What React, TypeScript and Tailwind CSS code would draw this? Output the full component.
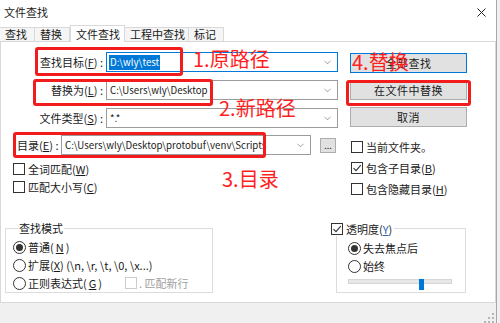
import { ChevronDown } from "lucide-react";

const RED = "border-[#f21c1c]";

function Combo({ value, width, focused, selected }: { value: string; width: string; focused?: boolean; selected?: boolean }) {
  return (
    <div
      className={`${width} h-[20px] flex items-center justify-between border bg-white pl-[2px] pr-[4px] ${
        focused ? "border-[#0078d7]" : "border-[#9c9c9c]"
      }`}
    >
      <span
        className={`text-[9.7px] leading-[15px] px-[1px] whitespace-nowrap ${
          selected ? "bg-[#0078d7] text-white" : "text-[#1a1a1a]"
        }`}
      >
        {value}
      </span>
      <ChevronDown size={11} strokeWidth={1.2} className="text-[#555]" />
    </div>
  );
}

function Label({ text, hot, suffix = "" }: { text: string; hot: string; suffix?: string }) {
  return (
    <>
      {text}(<u>{hot}</u>){suffix}
    </>
  );
}

function CheckBox({ checked, disabled }: { checked?: boolean; disabled?: boolean }) {
  return (
    <span
      className={`w-[12px] h-[12px] shrink-0 border bg-white flex items-center justify-center ${
        disabled ? "border-[#cccccc]" : "border-[#333]"
      }`}
    >
      {checked && (
        <svg width="10" height="10" viewBox="0 0 10 10">
          <path d="M1.5 5.2 L4 7.7 L8.8 2.2" fill="none" stroke="#333" strokeWidth="1.1" />
        </svg>
      )}
    </span>
  );
}

function Radio({ on }: { on?: boolean }) {
  return (
    <span className="w-[13px] h-[13px] shrink-0 rounded-full border border-[#333] bg-white flex items-center justify-center">
      {on && <span className="w-[7px] h-[7px] rounded-full bg-[#333]" />}
    </span>
  );
}

function Button({ children, focused }: { children: React.ReactNode; focused?: boolean }) {
  return (
    <div
      className={`w-[117px] h-[20px] flex items-center justify-center bg-[#e1e1e1] border text-[11px] leading-[14px] tracking-[0.5px] text-[#1a1a1a] ${
        focused ? "border-[#0078d7]" : "border-[#adadad]"
      }`}
    >
      {children}
    </div>
  );
}

const tabs = [
  { name: "查找", w: "w-[35px]" },
  { name: "替换", w: "w-[35px]" },
  { name: "文件查找", w: "w-[55px]", active: true },
  { name: "工程中查找", w: "w-[64px]" },
  { name: "标记", w: "w-[35px]" },
];

export default function App() {
  return (
    <div className="relative w-[500px] h-[323px] overflow-hidden bg-[#f0f0f0] text-[#1a1a1a] font-['Noto_Sans_CJK_SC','Noto_Sans',sans-serif]">
      <div className="w-[497px] h-full border-r border-[#a8a8a8]">
        {/* title bar */}
        <div className="h-[24px] bg-white flex items-center justify-between pl-[4px] pr-[10px]">
          <span className="text-[11px] leading-[14px]">文件查找</span>
          <svg width="9" height="9" viewBox="0 0 9 9">
            <path d="M0.5 0.5 L8.5 8.5 M8.5 0.5 L0.5 8.5" stroke="#222" strokeWidth="1" />
          </svg>
        </div>

        {/* tab strip */}
        <div className="h-[17px] bg-white flex items-end relative z-10">
          {tabs.map((t, i) => (
            <div
              key={t.name}
              className={`${t.w} border-t border-r border-[#d9d9d9] text-[11px] leading-[13px] pl-[5px] whitespace-nowrap ${
                i === 0 ? "border-l-0" : ""
              } ${t.active ? "h-[17px] -mb-px bg-white border-l pt-[2px] pl-[4px]" : "h-[14px] bg-[#f5f5f5]"}`}
            >
              {t.name}
            </div>
          ))}
        </div>

        {/* panel */}
        <div className="w-[496px] h-[262px] bg-white border border-[#d9d9d9]">
          <div className="h-[157px] flex pt-[10px]">
            {/* left form */}
            <div className="w-[337px] flex flex-col">
              <div className="flex flex-col gap-[8px]">
                <div className="flex items-center gap-[3px]">
                  <span className="w-[102px] text-right text-[11px] leading-[14px] whitespace-nowrap">
                    <Label text="查找目标" hot="F" suffix=" :" />
                  </span>
                  <Combo value="D:\wly\test" width="w-[232px]" focused selected />
                </div>
                <div className="flex items-center gap-[3px]">
                  <span className="w-[102px] text-right text-[11px] leading-[14px] whitespace-nowrap">
                    <Label text="替换为" hot="L" suffix=" :" />
                  </span>
                  <Combo value="C:\Users\wly\Desktop" width="w-[232px]" />
                </div>
                <div className="flex items-center gap-[3px]">
                  <span className="w-[102px] text-right text-[11px] leading-[14px] whitespace-nowrap">
                    <Label text="文件类型" hot="S" suffix=" :" />
                  </span>
                  <Combo value="*.*" width="w-[232px]" />
                </div>
              </div>
              <div className="flex items-center mt-[7px] pl-[16px]">
                <span className="w-[44px] text-[11px] leading-[14px] whitespace-nowrap">
                  <Label text="目录" hot="E" suffix=" :" />
                </span>
                <Combo value="C:\Users\wly\Desktop\protobuf\venv\Scripts" width="w-[250px]" />
                <div className="ml-[9px] w-[16px] h-[15px] bg-[#e1e1e1] border border-[#adadad] flex items-center justify-center text-[9px] leading-[9px]">
                  ...
                </div>
              </div>
              <div className="mt-[5px] pl-[12px] flex flex-col text-[11px] leading-[14px]">
                <div className="h-[18px] flex items-center gap-[3px]">
                  <CheckBox />
                  <span>
                    <Label text="全词匹配" hot="W" />
                  </span>
                </div>
                <div className="h-[18px] flex items-center gap-[3px]">
                  <CheckBox />
                  <span>
                    <Label text="匹配大小写" hot="C" />
                  </span>
                </div>
              </div>
            </div>

            {/* right buttons */}
            <div className="flex flex-col pt-[1px] pl-[12px]">
              <div className="flex flex-col gap-[7px]">
                <Button focused>全部查找</Button>
                <Button>在文件中替换</Button>
                <Button>取消</Button>
              </div>
              <div className="mt-[9px] pl-[1px] flex flex-col text-[11px] leading-[14px]">
                <div className="h-[21px] flex items-center gap-[3px]">
                  <CheckBox />
                  <span>当前文件夹。</span>
                </div>
                <div className="h-[21px] flex items-center gap-[3px]">
                  <CheckBox checked />
                  <span>
                    <Label text="包含子目录" hot="B" />
                  </span>
                </div>
                <div className="h-[21px] flex items-center gap-[3px]">
                  <CheckBox />
                  <span>
                    <Label text="包含隐藏目录" hot="H" />
                  </span>
                </div>
              </div>
            </div>
          </div>

          {/* bottom groups */}
          <div className="mt-[22px] flex items-start text-[11px] leading-[14px]">
            <fieldset className="ml-[4px] w-[208px] h-[72px] border border-[#dcdcdc] pl-[7px]">
              <legend className="ml-[5px] px-[1px]">查找模式</legend>
              <div className="pt-[3px] flex flex-col">
                <div className="h-[18px] flex items-center gap-[2px]">
                  <Radio on />
                  <Label text="普通" hot="N" />
                </div>
                <div className="h-[18px] flex items-center gap-[2px]">
                  <Radio />
                  <span>
                    <Label text="扩展" hot="X" /> (\n, \r, \t, \0, \x...)
                  </span>
                </div>
                <div className="h-[18px] flex items-center gap-[2px]">
                  <Radio />
                  <Label text="正则表达式" hot="G" />
                  <span className="ml-[21px] flex items-center gap-[2px] text-[#a0a0a0]">
                    <CheckBox disabled />
                    <span>. 匹配新行</span>
                  </span>
                </div>
              </div>
            </fieldset>

            <div className="relative ml-[123px] pt-[7px]">
              <div className="w-[130px] h-[65px] border border-[#dcdcdc] pt-[10px] pl-[11px]">
                <div className="h-[18px] flex items-center gap-[2px]">
                  <Radio on />
                  <span>失去焦点后</span>
                </div>
                <div className="h-[18px] flex items-center gap-[2px]">
                  <Radio />
                  <span>始终</span>
                </div>
                <div className="relative w-[104px] h-[11px]">
                  <div className="mt-[4px] h-[5px] bg-[#e7e7e7] border border-[#d6d6d6]" />
                  <div className="absolute left-[71px] top-0 w-[5px] h-[11px] bg-[#0078d7]" />
                </div>
              </div>
              {/* checkbox sitting over the group border */}
              <div className="absolute left-[-5px] top-[1px] h-[14px] flex items-center gap-[3px] bg-white pr-[2px]">
                <CheckBox checked />
                <span>
                  透明度(<u className="text-[#2a5db0]">Y</u>)
                </span>
              </div>
            </div>
          </div>
        </div>

        {/* size grip */}
        <div className="flex justify-end pr-[2px] pt-[10px]">
          <svg width="10" height="10" viewBox="0 0 10 10" fill="#b5b5b5">
            <rect x="8" y="0" width="2" height="2" />
            <rect x="4" y="4" width="2" height="2" />
            <rect x="8" y="4" width="2" height="2" />
            <rect x="0" y="8" width="2" height="2" />
            <rect x="4" y="8" width="2" height="2" />
            <rect x="8" y="8" width="2" height="2" />
          </svg>
        </div>
      </div>

      {/* red annotations drawn over the dialog */}
      <div className={`absolute left-[35px] top-[47px] w-[148px] h-[29px] border-[3px] ${RED} rounded-[3px]`} />
      <div className={`absolute left-[33px] top-[79px] w-[180px] h-[27px] border-[3px] ${RED} rounded-[3px]`} />
      <div className={`absolute left-[13px] top-[132px] w-[253px] h-[26px] border-[3px] ${RED} rounded-[3px]`} />
      <div className={`absolute left-[346px] top-[80px] w-[125px] h-[26px] border-[3px] ${RED} rounded-[3px]`} />

      <span className="absolute left-[193px] top-[46px] text-[20px] leading-[26px] text-[#ff1f1f] whitespace-nowrap">1.原路径</span>
      <span className="absolute left-[219px] top-[95px] text-[20px] leading-[26px] text-[#ff1f1f] whitespace-nowrap">2.新路径</span>
      <span className="absolute left-[222px] top-[166px] text-[20px] leading-[26px] text-[#ff1f1f] whitespace-nowrap">3.目录</span>
      <span className="absolute left-[352px] top-[49px] text-[20px] leading-[26px] text-[#ff1f1f] whitespace-nowrap">4.替换</span>
    </div>
  );
}
